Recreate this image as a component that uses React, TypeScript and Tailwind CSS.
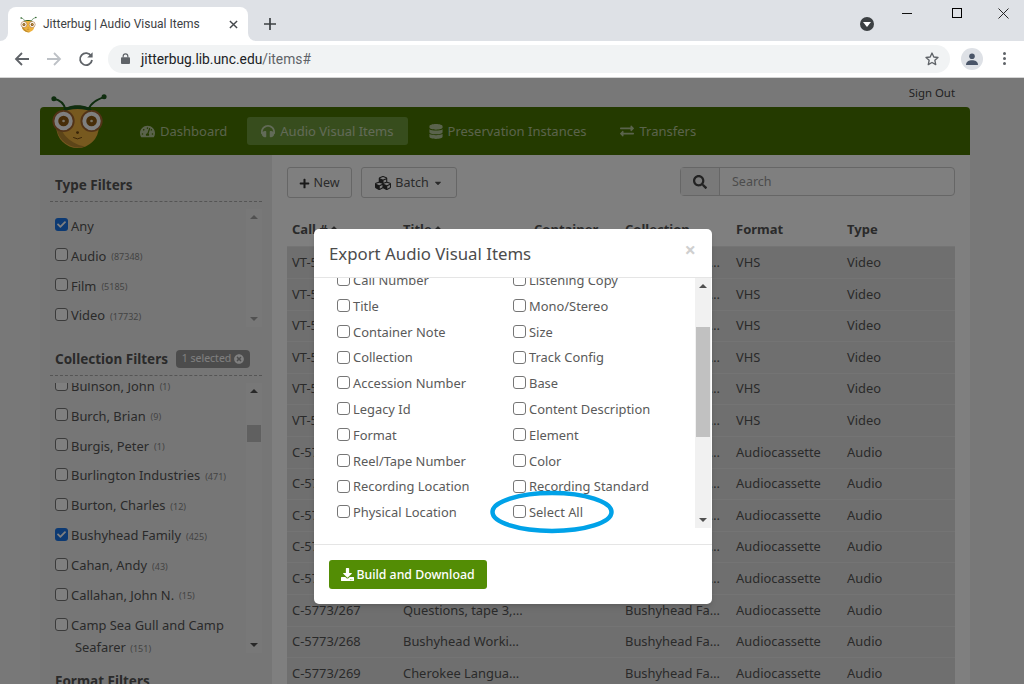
import { FaTachometerAlt, FaHeadphones, FaDatabase, FaExchangeAlt, FaPlus, FaCubes, FaSearch, FaDownload, FaCaretDown, FaSortUp, FaTimesCircle, FaCheck } from "react-icons/fa"

const typeFilters = [
  { label: "Any", checked: true },
  { label: "Audio", count: "87348" },
  { label: "Film", count: "5185" },
  { label: "Video", count: "17732" },
]

const collections = [
  { label: "Bulnson, John", count: "1" },
  { label: "Burch, Brian", count: "9" },
  { label: "Burgis, Peter", count: "1" },
  { label: "Burlington Industries", count: "471" },
  { label: "Burton, Charles", count: "12" },
  { label: "Bushyhead Family", count: "425", checked: true },
  { label: "Cahan, Andy", count: "43" },
  { label: "Callahan, John N.", count: "15" },
]

const exportFields = [
  ["Call Number", "Listening Copy"],
  ["Title", "Mono/Stereo"],
  ["Container Note", "Size"],
  ["Collection", "Track Config"],
  ["Accession Number", "Base"],
  ["Legacy Id", "Content Description"],
  ["Format", "Element"],
  ["Reel/Tape Number", "Color"],
  ["Recording Location", "Recording Standard"],
  ["Physical Location", "Select All"],
]

const rows = [
  ["VT-5773/1", "Bushyhead Vid…", "", "Bushyhead Fa…", "VHS", "Video"],
  ["VT-5773/2", "Bushyhead Vid…", "", "Bushyhead Fa…", "VHS", "Video"],
  ["VT-5773/3", "Bushyhead Vid…", "", "Bushyhead Fa…", "VHS", "Video"],
  ["VT-5773/4", "Bushyhead Vid…", "", "Bushyhead Fa…", "VHS", "Video"],
  ["VT-5773/5", "Bushyhead Vid…", "", "Bushyhead Fa…", "VHS", "Video"],
  ["VT-5773/6", "Bushyhead Vid…", "", "Bushyhead Fa…", "VHS", "Video"],
  ["C-5773/262", "Bushyhead Worki…", "", "Bushyhead Fa…", "Audiocassette", "Audio"],
  ["C-5773/263", "Bushyhead Worki…", "", "Bushyhead Fa…", "Audiocassette", "Audio"],
  ["C-5773/264", "Bushyhead Worki…", "", "Bushyhead Fa…", "Audiocassette", "Audio"],
  ["C-5773/265", "Bushyhead Worki…", "", "Bushyhead Fa…", "Audiocassette", "Audio"],
  ["C-5773/266", "Bushyhead Worki…", "", "Bushyhead Fa…", "Audiocassette", "Audio"],
  ["C-5773/267", "Questions, tape 3,…", "", "Bushyhead Fa…", "Audiocassette", "Audio"],
  ["C-5773/268", "Bushyhead Worki…", "", "Bushyhead Fa…", "Audiocassette", "Audio"],
  ["C-5773/269", "Cherokee Langua…", "", "Bushyhead Fa…", "Audiocassette", "Audio"],
]

const colWidths = ["w-[111px]", "w-[131px]", "w-[91px]", "w-[111px]", "w-[111px]", "w-[113px]"]

function Bug({ className }: { className: string }) {
  return (
    <svg viewBox="0 0 60 58" className={className}>
      <path d="M16 17 C14 9 9 7 4 6" fill="none" stroke="#1e5a1e" strokeWidth="2" />
      <path d="M40 17 C42 10 49 7 56 4" fill="none" stroke="#1e5a1e" strokeWidth="2" />
      <circle cx="4" cy="6" r="2.6" fill="#1e5a1e" />
      <circle cx="56" cy="4" r="2.6" fill="#1e5a1e" />
      <circle cx="28.5" cy="35" r="22" fill="#efb23e" />
      <path d="M9 24 C8 38 18 52 36 55.5 C22 60 6 48 6.5 33 Z" fill="#bb8a30" />
      <path d="M11 21 C16 10 41 10 46 21 C36 15 21 15 11 21 Z" fill="#1e5a1e" />
      <circle cx="14" cy="29" r="10.5" fill="#ffffff" stroke="#a5672e" strokeWidth="2" />
      <circle cx="43" cy="29" r="10.5" fill="#ffffff" stroke="#a5672e" strokeWidth="2" />
      <circle cx="14" cy="29" r="5.5" fill="#8f5a10" />
      <circle cx="43" cy="29" r="5.5" fill="#8f5a10" />
      <circle cx="14" cy="29" r="1.4" fill="#f4e8c8" />
      <circle cx="43" cy="29" r="1.4" fill="#f4e8c8" />
      <circle cx="28.5" cy="41" r="1.5" fill="#70480f" />
      <path d="M24 46 Q28.5 49 33 46" fill="none" stroke="#70480f" strokeWidth="1" />
    </svg>
  )
}

function Check({ checked }: { checked?: boolean }) {
  return checked ? (
    <span className="flex h-[13px] w-[13px] shrink-0 items-center justify-center rounded-[3px] bg-[#1a74e6] text-white">
      <FaCheck className="h-[9px] w-[9px]" />
    </span>
  ) : (
    <span className="h-[13px] w-[13px] shrink-0 rounded-[3px] border border-[#767676] bg-white" />
  )
}

function FilterRow({ label, count, checked }: { label: string; count?: string; checked?: boolean }) {
  return (
    <div className="flex h-[29.9px] items-center">
      <Check checked={checked} />
      <span className="ml-[3px] mt-[3px] text-[12.9px] whitespace-nowrap">{label}</span>
      {count && <span className="ml-[5px] mt-[4px] text-[9px] text-[#888]">({count})</span>}
    </div>
  )
}

function Scrollbar({ thumb, muted }: { thumb?: string; muted?: boolean }) {
  return (
    <div className="relative flex h-full w-[16px] shrink-0 flex-col items-center justify-between bg-[#f1f1f1] py-[6px]">
      <span className={`h-0 w-0 border-x-[4px] border-b-[4px] border-x-transparent ${muted ? "border-b-[#a3a3a3]" : "border-b-[#505050]"}`} />
      {thumb && <span className={`absolute inset-x-[1px] bg-[#c1c1c1] ${thumb}`} />}
      <span className={`h-0 w-0 border-x-[4px] border-t-[4px] border-x-transparent ${muted ? "border-t-[#a3a3a3]" : "border-t-[#505050]"}`} />
    </div>
  )
}

function BrowserChrome() {
  return (
    <div className="shrink-0 font-['Roboto',sans-serif] text-[#3c4043]">
      <div className="flex h-[41px] bg-[#dee1e6] pl-[8px] pt-[7px]">
        <div className="relative flex h-[34px] w-[240px] items-center rounded-t-[8px] bg-white pl-[12px] pr-[10px]">
          <span className="absolute -left-[8px] bottom-0 h-[8px] w-[8px] bg-white">
            <span className="block h-full w-full rounded-br-[8px] bg-[#dee1e6]" />
          </span>
          <span className="absolute -right-[8px] bottom-0 h-[8px] w-[8px] bg-white">
            <span className="block h-full w-full rounded-bl-[8px] bg-[#dee1e6]" />
          </span>
          <Bug className="h-[17px] w-[17px]" />
          <span className="ml-[6px] flex-1 text-[12px] whitespace-nowrap">Jitterbug | Audio Visual Items</span>
          <svg viewBox="0 0 10 10" className="h-[9px] w-[9px]"><path d="M1 1 9 9M9 1 1 9" stroke="#45484c" strokeWidth="1.6" /></svg>
        </div>
        <svg viewBox="0 0 12 12" className="ml-[16px] mt-[11px] h-[12px] w-[12px]"><path d="M6 0v12M0 6h12" stroke="#3c4043" strokeWidth="1.7" /></svg>
        <div className="ml-auto flex items-start">
          <span className="mt-[10px] flex h-[14px] w-[14px] items-center justify-center rounded-full bg-[#3c4043]">
            <span className="mt-[1px] h-0 w-0 border-x-[4px] border-t-[5px] border-x-transparent border-t-white" />
          </span>
          <svg viewBox="0 0 10 1" className="ml-[28px] mt-[6px] h-[1px] w-[10px]"><path d="M0 .5h10" stroke="#111" /></svg>
          <span className="ml-[40px] mt-[1px] h-[10px] w-[10px] border border-black" />
          <svg viewBox="0 0 11 11" className="ml-[36px] mt-[1px] mr-[15px] h-[11px] w-[11px]"><path d="M.5.5l10 10M10.5.5l-10 10" stroke="#111" strokeWidth=".9" /></svg>
        </div>
      </div>
      <div className="flex h-[37px] items-center border-b border-[#d5d5d5] bg-white pb-[1px]">
        <svg viewBox="0 0 16 16" className="ml-[14px] h-[16px] w-[16px]"><path d="M15 8H2M8 2 2 8l6 6" fill="none" stroke="#5f6368" strokeWidth="1.8" /></svg>
        <svg viewBox="0 0 16 16" className="ml-[16px] h-[16px] w-[16px]"><path d="M1 8h13M8 2l6 6-6 6" fill="none" stroke="#bdc1c6" strokeWidth="1.8" /></svg>
        <svg viewBox="0 0 16 16" className="ml-[16px] h-[16px] w-[16px]"><path d="M13.2 5A6 6 0 1 0 14 9" fill="none" stroke="#5f6368" strokeWidth="1.8" /><path d="M14.6 1.2v5.4H9.2z" fill="#5f6368" /></svg>
        <div className="ml-[14px] flex h-[28px] w-[842px] items-center rounded-full bg-[#f1f3f4] pl-[13px] pr-[10px]">
          <svg viewBox="0 0 10 12" className="h-[11px] w-[9px]"><path d="M2.4 5V3.4a2.6 2.6 0 0 1 5.2 0V5" fill="none" stroke="#5f6368" strokeWidth="1.3" /><rect y="4.6" width="10" height="7.4" rx="1" fill="#5f6368" /></svg>
          <span className="ml-[11px] mt-[1px] flex-1 text-[13.8px] whitespace-nowrap text-[#202124]">
            jitterbug.lib.unc.edu<span className="text-[#5f6368]">/items#</span>
          </span>
          <svg viewBox="0 0 24 24" className="h-[16px] w-[16px]"><path d="M12 3l2.7 6 6.3.7-4.7 4.3 1.3 6.4L12 17.2 6.4 20.4 7.7 14 3 9.7 9.3 9z" fill="none" stroke="#5f6368" strokeWidth="2" strokeLinejoin="round" /></svg>
        </div>
        <span className="ml-[11px] flex h-[22px] w-[22px] items-center justify-center rounded-full bg-[#dee1e6]">
          <svg viewBox="0 0 12 12" className="h-[12px] w-[12px]"><circle cx="6" cy="3.2" r="2.8" fill="#4a5568" /><path d="M0 12c0-3.4 3-4.8 6-4.8s6 1.4 6 4.8z" fill="#4a5568" /></svg>
        </span>
        <span className="ml-[20px] flex flex-col gap-[2px]">
          <span className="h-[3px] w-[3px] rounded-full bg-[#5f6368]" />
          <span className="h-[3px] w-[3px] rounded-full bg-[#5f6368]" />
          <span className="h-[3px] w-[3px] rounded-full bg-[#5f6368]" />
        </span>
      </div>
    </div>
  )
}

function NavItem({ icon, label, active }: { icon: React.ReactNode; label: string; active?: boolean }) {
  return (
    <div className={`flex h-[28px] items-center gap-[5px] rounded-[3px] px-[14px] text-[13px] text-white/60 ${active ? "bg-[#6f9a3b]" : ""}`}>
      {icon}
      <span className="pt-[2px] whitespace-nowrap">{label}</span>
    </div>
  )
}

function Sidebar() {
  return (
    <div className="h-[540px] w-[232px] shrink-0 overflow-hidden bg-[#ededed] px-[10px]">
      <div className="flex h-[47px] items-end border-b border-dashed border-[#aaa] pb-[6px] pl-[5px] text-[13.5px] font-bold">Type Filters</div>
      <div className="mt-[7px] flex h-[118px] items-start justify-between pl-[5px]">
        <div className="pt-[1px]">
          {typeFilters.map((f) => <FilterRow key={f.label} {...f} />)}
        </div>
        <Scrollbar muted />
      </div>
      <div className="mt-[13px] flex h-[36px] items-center gap-[8px] border-b border-dashed border-[#aaa] pl-[5px] pt-[3px]">
        <span className="text-[13.5px] font-bold whitespace-nowrap">Collection Filters</span>
        <span className="flex h-[18px] w-[74px] items-center justify-center gap-[3px] rounded-[4px] bg-[#999] text-[10.5px] text-white whitespace-nowrap">
          1 selected <FaTimesCircle className="h-[10px] w-[10px]" />
        </span>
      </div>
      <div className="mt-[7px] flex h-[270px] items-start justify-between overflow-hidden pl-[5px]">
        <div className="-mt-[13px]">
          {collections.map((c) => <FilterRow key={c.label} {...c} />)}
          <div className="flex h-[30px] items-center">
            <Check />
            <span className="ml-[3px] mt-[3px] text-[12.9px] whitespace-nowrap">Camp Sea Gull and Camp</span>
          </div>
          <div className="ml-[20px] -mt-[1px] text-[12.9px]">Seafarer <span className="ml-[1px] text-[9px] text-[#888]">(151)</span></div>
        </div>
        <Scrollbar thumb="top-[42px] h-[17px]" />
      </div>
      <div className="mt-[18px] pl-[5px] text-[13.5px] font-bold">Format Filters</div>
    </div>
  )
}

function ItemsTable() {
  return (
    <div className="mt-[15px]">
      <div className="flex h-[33.4px] items-center text-[13px] font-bold">
        {["Call #", "Title", "Container", "Collection", "Format", "Type"].map((h, i) => (
          <div key={h} className={`${colWidths[i]} flex items-center px-[5px]`}>
            {h}
            {i < 2 && <FaSortUp className="mt-[3px] h-[12px] w-[12px]" />}
          </div>
        ))}
      </div>
      {rows.map((row) => (
        <div key={row[0]} className="flex h-[31.6px] items-center border-t border-[#e8e8e8] bg-[#dfdfdf] text-[12.9px]">
          {row.map((cell, i) => (
            <div key={i} className={`${colWidths[i]} overflow-hidden px-[5px] whitespace-nowrap`}>{cell}</div>
          ))}
        </div>
      ))}
    </div>
  )
}

function ExportModal() {
  return (
    <div className="absolute left-[314px] top-[151px] flex w-[398px] flex-col rounded-[5px] bg-white text-[#5a5a5a] shadow-md">
      <div className="flex h-[49px] items-center justify-between border-b border-[#e5e5e5] pl-[15px] pr-[16px]">
        <h4 className="pt-[2px] text-[16.8px] text-[#4c4c4c]">Export Audio Visual Items</h4>
        <span className="-mt-[6px] text-[20px] leading-none font-bold text-[#cfcfcf]">×</span>
      </div>
      <div className="flex h-[250px] justify-between overflow-hidden">
        <div className="-mt-[11.2px] ml-[23px]">
          {exportFields.map(([left, right]) => (
            <div key={left} className="flex h-[25.8px] items-center">
              <div className="flex w-[176px] items-center gap-[3px]">
                <Check />
                <span className="pt-[2px] text-[12.9px] whitespace-nowrap">{left}</span>
              </div>
              <div className="flex items-center gap-[3px]">
                <Check />
                <span className="pt-[2px] text-[12.9px] whitespace-nowrap">{right}</span>
              </div>
            </div>
          ))}
        </div>
        <div className="mr-[1px]">
          <Scrollbar thumb="top-[49px] h-[110px]" />
        </div>
      </div>
      <div className="mt-[16px] border-t border-[#e5e5e5] px-[15px] pb-[15px] pt-[15px]">
        <button className="flex h-[29px] w-[158px] items-center justify-center gap-[2px] rounded-[3px] bg-[#538d05] text-[12.3px] font-medium text-white">
          <FaDownload className="h-[13px] w-[13px]" /> <span className="pt-[2px]">Build and Download</span>
        </button>
      </div>
    </div>
  )
}

export default function App() {
  return (
    <div className="flex h-[684px] w-[1024px] flex-col overflow-hidden bg-[#f0f0f0] font-['Noto_Sans',sans-serif] text-[#555]">
      <BrowserChrome />
      <div className="relative flex-1 overflow-hidden">
        <div className="ml-[40px] w-[930px]">
          <div className="flex h-[29px] items-center justify-end pr-[15px] text-[11.4px] text-[#444]">Sign Out</div>
          <div className="relative flex h-[48px] items-center rounded-t-[4px] bg-[#487400] pl-[86px]">
            <Bug className="absolute -top-[14px] left-[10px] h-[56px] w-[58px]" />
            <NavItem icon={<FaTachometerAlt className="h-[15px] w-[15px]" />} label="Dashboard" />
            <span className="w-[6px]" />
            <NavItem active icon={<FaHeadphones className="h-[14px] w-[14px]" />} label="Audio Visual Items" />
            <span className="w-[7px]" />
            <NavItem icon={<FaDatabase className="h-[15px] w-[14px]" />} label="Preservation Instances" />
            <span className="w-[6px]" />
            <NavItem icon={<FaExchangeAlt className="h-[14px] w-[14px]" />} label="Transfers" />
          </div>
          <div className="flex bg-white">
            <Sidebar />
            <div className="flex-1 px-[15px] pt-[12px]">
              <div className="flex items-start">
                <button className="flex h-[31px] w-[65px] items-center justify-center gap-[3px] rounded-[3px] border border-[#ccc] bg-white pt-[1px] text-[12.5px]">
                  <FaPlus className="h-[11px] w-[11px] text-[#333]" /> New
                </button>
                <button className="ml-[9px] flex h-[31px] w-[96px] items-center justify-center gap-[4px] rounded-[3px] border border-[#ccc] bg-white pt-[1px] text-[12.5px]">
                  <FaCubes className="h-[16px] w-[16px] text-[#333]" /> Batch <FaCaretDown className="h-[10px] w-[10px]" />
                </button>
                <div className="ml-auto flex h-[29px] w-[275px] rounded-[4px] border border-[#ccc] bg-white">
                  <span className="flex w-[39px] items-center justify-center border-r border-[#ccc] bg-[#f2f2f2] text-[#444]">
                    <FaSearch className="h-[14px] w-[14px]" />
                  </span>
                  <span className="flex items-center pl-[12px] pt-[2px] text-[12.5px] text-[#999]">Search</span>
                </div>
              </div>
              <ItemsTable />
            </div>
          </div>
        </div>
        <div className="absolute inset-0 bg-black/50" />
        <ExportModal />
        <svg viewBox="0 0 126 44" className="absolute left-[490px] top-[412px] h-[44px] w-[126px]">
          <ellipse cx="62" cy="22" rx="59.5" ry="19" fill="none" stroke="#00a2e8" strokeWidth="4.5" />
        </svg>
      </div>
    </div>
  )
}
